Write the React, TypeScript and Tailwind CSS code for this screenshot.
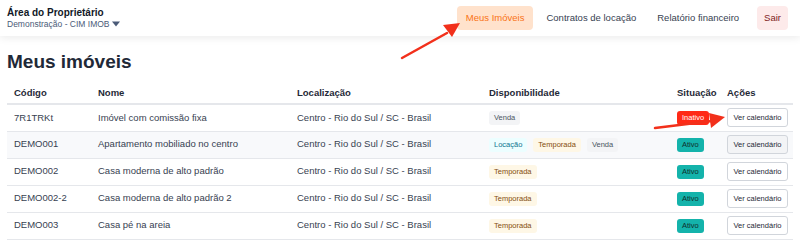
import React from 'react';

type Chip = 'Venda' | 'Locação' | 'Temporada';

interface Imovel {
  codigo: string;
  nome: string;
  local: string;
  disp: Chip[];
  ativo: boolean;
}

const IMOVEIS: Imovel[] = [
  { codigo: '7R1TRKt', nome: 'Imóvel com comissão fixa', local: 'Centro - Rio do Sul / SC - Brasil', disp: ['Venda'], ativo: false },
  { codigo: 'DEMO001', nome: 'Apartamento mobiliado no centro', local: 'Centro - Rio do Sul / SC - Brasil', disp: ['Locação', 'Temporada', 'Venda'], ativo: true },
  { codigo: 'DEMO002', nome: 'Casa moderna de alto padrão', local: 'Centro - Rio do Sul / SC - Brasil', disp: ['Temporada'], ativo: true },
  { codigo: 'DEMO002-2', nome: 'Casa moderna de alto padrão 2', local: 'Centro - Rio do Sul / SC - Brasil', disp: ['Temporada'], ativo: true },
  { codigo: 'DEMO003', nome: 'Casa pé na areia', local: 'Centro - Rio do Sul / SC - Brasil', disp: ['Temporada'], ativo: true },
];

const CHIP_STYLE: Record<Chip, string> = {
  Venda: 'bg-[#f3f4f6] text-[#4b5563]',
  Locação: 'bg-[#ecfeff] text-[#0e7490]',
  Temporada: 'bg-[#fef7e6] text-[#854d0e]',
};

export default function App() {
  return (
    <div className="relative w-[800px] h-[250px] overflow-hidden bg-white font-['Liberation_Sans',Arial,sans-serif] text-[#1f2937]">
      {/* Header */}
      <header className="relative z-10 h-[36px] bg-white flex items-center justify-between pl-[7px] pr-[12px] shadow-[0_2px_8px_rgba(0,0,0,0.08)]">
        <div className="flex flex-col leading-none">
          <span className="text-[10px] font-bold text-[#111827]">Área do Proprietário</span>
          <span className="mt-[2px] text-[8.5px] text-[#4b5b78] flex items-center gap-[2px]">
            Demonstração - CIM IMOB
            <svg width="8" height="6" viewBox="0 0 8 6"><path d="M0 0.5h8L4 5.5z" fill="#4b5b78" /></svg>
          </span>
        </div>
        <nav className="flex items-center text-[9.5px]">
          <span className="h-[24px] px-[9px] flex items-center rounded-[4px] bg-[#ffe2cc] text-[#f97316]">Meus Imóveis</span>
          <span className="ml-[13px] text-[#374151]">Contratos de locação</span>
          <span className="ml-[21px] text-[#374151]">Relatório financeiro</span>
          <span className="ml-[18px] h-[24px] px-[7px] flex items-center rounded-[4px] bg-[#fdeaea] text-[#7f1d1d] font-medium">Sair</span>
        </nav>
      </header>

      {/* Content */}
      <main className="px-[7px] pt-[14px]">
        <h1 className="text-[19px] font-bold text-[#1f2937] leading-[24px]">Meus imóveis</h1>
        <table className="mt-[9px] w-full table-fixed border-collapse text-[9.5px]">
          <colgroup>
            <col className="w-[84px]" />
            <col className="w-[199px]" />
            <col className="w-[192px]" />
            <col className="w-[188px]" />
            <col className="w-[50px]" />
            <col />
          </colgroup>
          <thead>
            <tr className="h-[21px] border-b-2 border-[#e5e7eb] text-left text-[#1f2937]">
              <th className="pl-[7px] font-bold">Código</th>
              <th className="pl-[7px] font-bold">Nome</th>
              <th className="pl-[7px] font-bold">Localização</th>
              <th className="pl-[7px] font-bold">Disponibilidade</th>
              <th className="pl-[7px] font-bold">Situação</th>
              <th className="pl-[7px] font-bold">Ações</th>
            </tr>
          </thead>
          <tbody>
            {IMOVEIS.map((im, i) => (
              <tr key={im.codigo} className={`h-[27px] border-b border-[#e5e7eb] text-[#374151] ${i === 1 ? 'bg-[#f8f9fb]' : ''}`}>
                <td className="pl-[7px]">{im.codigo}</td>
                <td className="pl-[7px]">{im.nome}</td>
                <td className="pl-[7px]">{im.local}</td>
                <td className="pl-[7px]">
                  <div className="flex gap-[6px]">
                    {im.disp.map((d) => (
                      <span key={d} className={`h-[14px] px-[5px] flex items-center rounded-[3px] text-[7.5px] ${CHIP_STYLE[d]}`}>{d}</span>
                    ))}
                  </div>
                </td>
                <td className="pl-[7px]">
                  {im.ativo ? (
                    <span className="inline-flex h-[14px] px-[5px] items-center rounded-[3px] bg-[#14b3ab] text-[#0f2e2c] text-[7.5px]">Ativo</span>
                  ) : (
                    <span className="inline-flex h-[14px] px-[5px] items-center rounded-[3px] bg-[#ff2a17] text-white text-[7.5px]">Inativo</span>
                  )}
                </td>
                <td className="pl-[7px]">
                  <span className={`inline-flex h-[19px] w-[61px] items-center justify-center rounded-[3px] border border-[#d1d5db] text-[7.5px] text-[#1f2937] ${i === 1 ? 'bg-[#f3f4f6]' : 'bg-white'}`}>Ver calendário</span>
                </td>
              </tr>
            ))}
          </tbody>
        </table>
      </main>

      {/* Annotation arrows */}
      <svg className="absolute left-0 top-0 z-20 pointer-events-none" width="800" height="250" viewBox="0 0 800 250">
        <line x1="402" y1="58" x2="447" y2="33" stroke="#f2301b" strokeWidth="2.5" strokeLinecap="round" />
        <polygon points="460,23 443,25 452,37" fill="#f2301b" />
        <line x1="655" y1="128" x2="712" y2="121" stroke="#f2301b" strokeWidth="2.5" strokeLinecap="round" />
        <polygon points="725,117 709,113 711,128" fill="#f2301b" />
      </svg>
    </div>
  );
}
